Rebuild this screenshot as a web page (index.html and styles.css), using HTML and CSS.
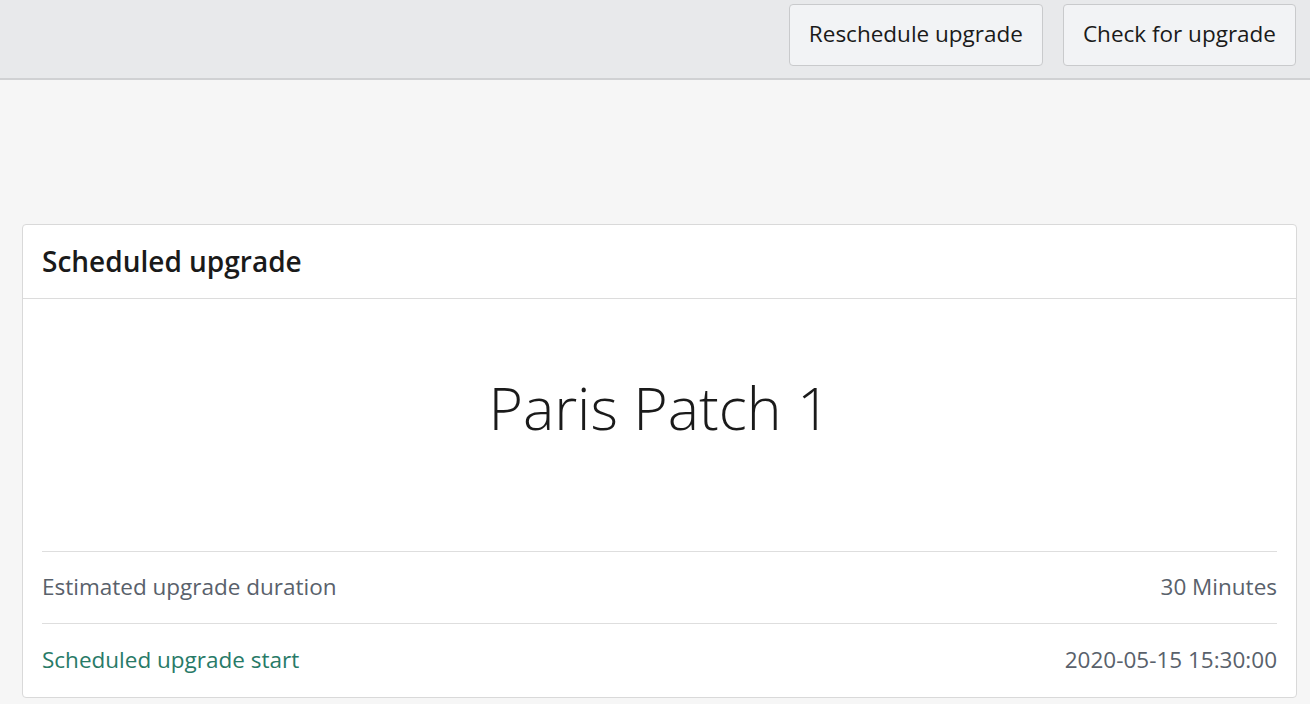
FILE: index.html
```html
<!DOCTYPE html>
<html>

<head>
    <meta charset="UTF-8">
    <title>Scheduled upgrade</title>
    <link rel="stylesheet" href="styles.css">
</head>

<body>
    <div class="toolbar">
        <button class="tool-btn">Reschedule upgrade</button>
        <button class="tool-btn">Check for upgrade</button>
    </div>

    <div class="page">
        <div class="card">
            <div class="card-header">Scheduled upgrade</div>
            <div class="card-body">
                <div class="release-name">Paris Patch 1</div>
                <div class="detail-row">
                    <span class="detail-label">Estimated upgrade duration</span>
                    <span class="detail-value">30 Minutes</span>
                </div>
                <div class="detail-row">
                    <span class="detail-label link">Scheduled upgrade start</span>
                    <span class="detail-value">2020-05-15 15:30:00</span>
                </div>
            </div>
        </div>
    </div>
</body>

</html>
```

FILE: styles.css
```css
body {
    font-family: "Open Sans", "Noto Sans", Arial, sans-serif;
    background-color: #f6f6f6;
    margin: 0;
    color: #1a1a1a;
}

.toolbar {
    display: flex;
    justify-content: flex-end;
    gap: 20px;
    height: 80px;
    padding: 4px 14px 0 0;
    box-sizing: border-box;
    background-color: #e8e9eb;
    border-bottom: 2px solid #d0d1d3;
}

button {
    font-family: inherit;
    cursor: pointer;
}

.tool-btn {
    height: 62px;
    padding: 0 19px 3px;
    background-color: #f2f3f5;
    border: 1px solid #c9cacc;
    border-radius: 4px;
    font-size: 22.5px;
    color: #1a1a1a;
}

.page {
    padding: 144px 13px 6px 22px;
}

.card {
    background: white;
    border: 1px solid #d9d9d9;
    border-radius: 4px;
}

.card-header {
    height: 74px;
    padding: 0 19px 2px;
    box-sizing: border-box;
    display: flex;
    align-items: center;
    font-size: 28px;
    font-weight: 600;
    border-bottom: 1px solid #dcdcdc;
}

.card-body {
    padding: 0 19px;
}

.release-name {
    height: 252px;
    display: flex;
    align-items: center;
    justify-content: center;
    font-size: 59px;
    font-weight: 300;
    padding-bottom: 36px;
    box-sizing: border-box;
}

.detail-row {
    display: flex;
    justify-content: space-between;
    align-items: center;
    height: 72px;
    padding-bottom: 2px;
    box-sizing: border-box;
    border-top: 1px solid #dedede;
    font-size: 22.5px;
    color: #59616b;
}

.detail-row + .detail-row {
    height: 74px;
}

.detail-label.link {
    color: #287a67;
}
```
